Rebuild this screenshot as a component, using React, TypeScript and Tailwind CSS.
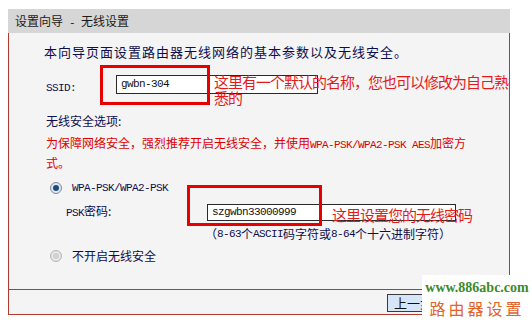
import React from 'react';

const cjk = "'Noto Sans CJK SC', 'Liberation Sans', sans-serif";
const mono = "'Liberation Mono', 'Noto Sans CJK SC', monospace";

// half-width latin runs, SimSun style: 6px per character
const M: React.FC<{ children: React.ReactNode }> = ({ children }) => (
    <span className="text-[11px] tracking-[-0.6px] whitespace-pre" style={{ fontFamily: mono }}>{children}</span>
);

const Radio: React.FC<{ checked?: boolean }> = ({ checked }) => (
    <span className={`w-[12px] h-[12px] rounded-full border flex items-center justify-center ${checked ? 'border-[#7d8d9c] bg-[#dfe6ee]' : 'border-[#b4b4b4] bg-[#e6e6e6]'}`}>
        <span className={`w-[6px] h-[6px] rounded-full ${checked ? 'bg-[#1d4c7c]' : 'bg-[#d2d2d2]'}`} />
    </span>
);

const App: React.FC = () => {
    return (
        <div className="w-[532px] h-[325px] bg-white relative overflow-hidden text-[#0e0e4e]" style={{ fontFamily: cjk }}>
            <div className="ml-[8px] mt-[9px] w-[502px] h-[24px] bg-[#d6d6d6] pl-[7px] leading-[24px] text-[12px] text-[#1a1a1a] whitespace-nowrap">
                设置向导<M>{' - '}</M>无线设置
            </div>

            <div className="ml-[8px] w-[502px] h-[282px] border-l border-r border-b border-[#b53a2e] bg-[#f4f4f4] flex flex-col overflow-hidden">
                <div className="mt-[10px] ml-[35px] h-[18px] flex items-center text-[13px] tracking-[1px] whitespace-nowrap">
                    本向导页面设置路由器无线网络的基本参数以及无线安全。
                </div>

                <div className="mt-[14px] ml-[37px] h-[19px] flex items-center">
                    <span className="w-[70px] text-[#0e0e4e]"><M>SSID:</M></span>
                    <div className="relative w-[202px] h-[19px]">
                        <div className="w-full h-full bg-white border border-[#2a2a2a] flex items-center pl-[4px] text-[#111]">
                            <M>gwbn-304</M>
                        </div>
                        <div className="absolute -left-[16px] -top-[10px] w-[110px] h-[40px] border-[3px] border-[#e60000]" />
                        <div className="absolute left-[98px] -top-[1px] text-[15px] leading-[16px] tracking-[-1px] text-[#e31b1b] whitespace-nowrap">
                            这里有一个默认的名称，您也可以修改为自己熟<br />悉的
                        </div>
                    </div>
                </div>

                <div className="mt-[18px] ml-[37px] h-[18px] flex items-center text-[12px]">无线安全选项:</div>

                <div className="mt-[4px] ml-[37px] text-[12px] leading-[18px] text-[#dd0000] whitespace-nowrap">
                    为保障网络安全，强烈推荐开启无线安全，并使用<M>WPA-PSK/WPA2-PSK AES</M>加密方<br />式。
                </div>

                <div className="mt-[7px] ml-[41px] h-[18px] flex items-center gap-[10px]">
                    <Radio checked />
                    <M>WPA-PSK/WPA2-PSK</M>
                </div>

                <div className="mt-[6px] ml-[57px] h-[18px] flex items-center">
                    <span className="w-[141px] text-[12px]"><M>PSK</M>密码:</span>
                    <div className="relative w-[249px] h-[17px]">
                        <div className="w-full h-full bg-white border border-[#2a2a2a] flex items-center pl-[4px] text-[#111]">
                            <M>szgwbn33000999</M>
                        </div>
                        <div className="absolute -left-[20px] -top-[19px] w-[135px] h-[41px] border-[3px] border-[#e60000]" />
                        <div className="absolute left-[125px] top-[3px] text-[15px] leading-[16px] tracking-[-1px] text-[#e31b1b] whitespace-nowrap">
                            这里设置您的无线密码
                        </div>
                    </div>
                </div>

                <div className="mt-[4px] ml-[196px] h-[18px] flex items-center text-[12px] whitespace-nowrap">
                    （<M>8-63</M>个<M>ASCII</M>码字符或<M>8-64</M>个十六进制字符）
                </div>

                <div className="mt-[4px] ml-[41px] h-[18px] flex items-center gap-[10px] text-[12px]">
                    <Radio />
                    不开启无线安全
                </div>

                <div className="mt-auto h-[25px] border-t border-[#b53a2e] pt-[4px] pl-[378px]">
                    <div className="w-[62px] h-[18px] bg-[#d6e6f8] border border-[#3a3a3a] flex items-center pl-[6px] text-[13px] text-[#111]">
                        上一步
                    </div>
                </div>
            </div>

            {/* site watermark */}
            <div className="absolute left-[422px] top-[275px] w-[110px] h-[50px] bg-white flex flex-col items-center">
                <div className="mt-[4px] text-[14px] leading-[18px] font-bold text-[#3d8a2a]" style={{ fontFamily: "'Liberation Serif', serif" }}>
                    www.886abc.com
                </div>
                <div className="text-[16px] leading-[22px] tracking-[3px] text-[#e2622c]">路由器设置</div>
            </div>
        </div>
    );
};

export default App;
